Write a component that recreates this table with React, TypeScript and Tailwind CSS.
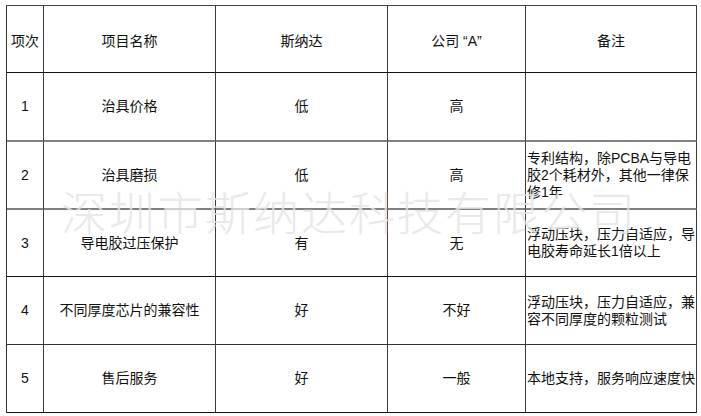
import React from "react";

type Row = {
  no: string;
  name: string;
  snd: string;
  a: string;
  note: string;
  h: string;
  b: string;
};

const rows: Row[] = [
  { no: "1", name: "治具价格", snd: "低", a: "高", note: "", h: "h-[69px]", b: "border-b-2 border-b-[#808080]" },
  { no: "2", name: "治具磨损", snd: "低", a: "高", note: "专利结构，除PCBA与导电胶2个耗材外，其他一律保修1年", h: "h-[68px]", b: "border-b-2 border-b-[#808080]" },
  { no: "3", name: "导电胶过压保护", snd: "有", a: "无", note: "浮动压块，压力自适应，导电胶寿命延长1倍以上", h: "h-[67px]", b: "border-b border-b-[#111]" },
  { no: "4", name: "不同厚度芯片的兼容性", snd: "好", a: "不好", note: "浮动压块，压力自适应，兼容不同厚度的颗粒测试", h: "h-[68px]", b: "border-b border-b-[#333]" },
  { no: "5", name: "售后服务", snd: "好", a: "一般", note: "本地支持，服务响应速度快", h: "h-[68px]", b: "border-b border-b-[#111]" },
];

const cell = "flex items-center justify-center border-r border-r-[#3a3a3a] text-[14px] text-[#111]";

export default function App() {
  return (
    <div
      className="relative w-[701px] h-[416px] bg-white overflow-hidden"
      style={{ fontFamily: '"Liberation Sans", "Noto Sans CJK SC", sans-serif' }}
    >
      <div className="pt-[5px] pl-[6px]">
        <div className="grid grid-cols-[37px_172px_172px_138px_171px] border-l border-t border-l-[#333] border-t-[#444] w-[691px]">
          <div className={`${cell} h-[67px] border-b border-b-[#111] pt-[4px]`}>项次</div>
          <div className={`${cell} h-[67px] border-b border-b-[#111] pt-[4px]`}>项目名称</div>
          <div className={`${cell} h-[67px] border-b border-b-[#111] pt-[4px]`}>斯纳达</div>
          <div className={`${cell} h-[67px] border-b border-b-[#111] pt-[4px]`}>公司 “A”</div>
          <div className={`${cell} h-[67px] border-b border-b-[#111] pt-[4px]`}>备注</div>
          {rows.map((r) => (
            <React.Fragment key={r.no}>
              <div className={`${cell} ${r.h} ${r.b}`}>{r.no}</div>
              <div className={`${cell} ${r.h} ${r.b}`}>{r.name}</div>
              <div className={`${cell} ${r.h} ${r.b}`}>{r.snd}</div>
              <div className={`${cell} ${r.h} ${r.b}`}>{r.a}</div>
              <div className={`flex items-center border-r border-r-[#3a3a3a] ${r.h} ${r.b} pl-[1px] text-[14px] leading-[17px] text-[#111]`}>
                <span className="block w-[169px] break-all">{r.note}</span>
              </div>
            </React.Fragment>
          ))}
        </div>
      </div>
      <div
        className="pointer-events-none absolute left-[61px] top-[183px] whitespace-nowrap text-[46px] leading-[54px] tracking-[2px] text-[#e4e4e4] opacity-80"
        style={{ fontFamily: '"Noto Sans CJK SC", sans-serif', fontWeight: 300 }}
      >
        深圳市斯纳达科技有限公司
      </div>
    </div>
  );
}
